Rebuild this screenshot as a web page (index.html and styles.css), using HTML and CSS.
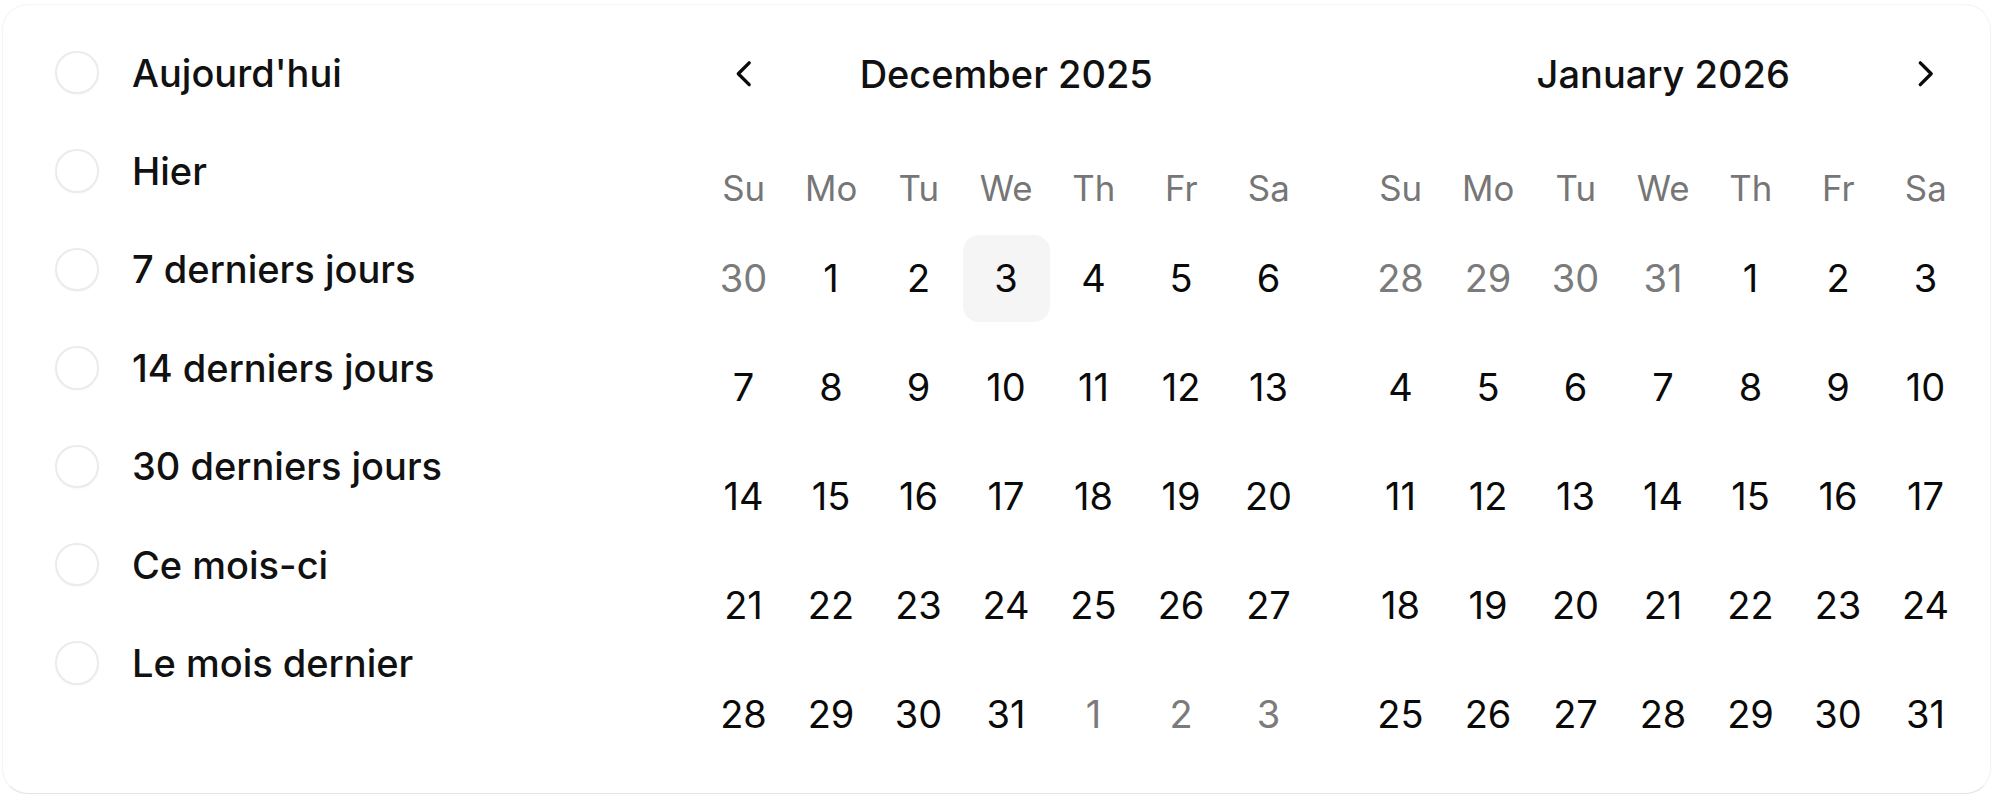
FILE: index.html
```html
<!DOCTYPE html>
<html lang="fr">
<head>
<meta charset="utf-8">
<title>Date range picker</title>
<link rel="stylesheet" href="styles.css">
</head>
<body>
<div class="card">
  <div class="presets">
    <label class="preset"><span class="radio"></span><span class="preset-label">Aujourd'hui</span></label>
    <label class="preset"><span class="radio"></span><span class="preset-label">Hier</span></label>
    <label class="preset"><span class="radio"></span><span class="preset-label">7 derniers jours</span></label>
    <label class="preset"><span class="radio"></span><span class="preset-label">14 derniers jours</span></label>
    <label class="preset"><span class="radio"></span><span class="preset-label">30 derniers jours</span></label>
    <label class="preset"><span class="radio"></span><span class="preset-label">Ce mois-ci</span></label>
    <label class="preset"><span class="radio"></span><span class="preset-label">Le mois dernier</span></label>
  </div>
  <div class="calendar">
    <div class="month">
      <div class="caption">
        <button class="nav nav-prev" aria-label="Previous month">
          <svg viewBox="0 0 24 24" fill="none" stroke="currentColor" stroke-width="1.85" stroke-linecap="round" stroke-linejoin="round"><path d="m15 18-6-6 6-6"/></svg>
        </button>
        <div class="title">December 2025</div>
      </div>
      <div class="weekdays">
        <span>Su</span><span>Mo</span><span>Tu</span><span>We</span><span>Th</span><span>Fr</span><span>Sa</span>
      </div>
      <div class="days">
        <span class="day out">30</span><span class="day">1</span><span class="day">2</span><span class="day today">3</span><span class="day">4</span><span class="day">5</span><span class="day">6</span>
        <span class="day">7</span><span class="day">8</span><span class="day">9</span><span class="day">10</span><span class="day">11</span><span class="day">12</span><span class="day">13</span>
        <span class="day">14</span><span class="day">15</span><span class="day">16</span><span class="day">17</span><span class="day">18</span><span class="day">19</span><span class="day">20</span>
        <span class="day">21</span><span class="day">22</span><span class="day">23</span><span class="day">24</span><span class="day">25</span><span class="day">26</span><span class="day">27</span>
        <span class="day">28</span><span class="day">29</span><span class="day">30</span><span class="day">31</span><span class="day out">1</span><span class="day out">2</span><span class="day out">3</span>
      </div>
    </div>
    <div class="month">
      <div class="caption">
        <div class="title">January 2026</div>
        <button class="nav nav-next" aria-label="Next month">
          <svg viewBox="0 0 24 24" fill="none" stroke="currentColor" stroke-width="1.85" stroke-linecap="round" stroke-linejoin="round"><path d="m9 18 6-6-6-6"/></svg>
        </button>
      </div>
      <div class="weekdays">
        <span>Su</span><span>Mo</span><span>Tu</span><span>We</span><span>Th</span><span>Fr</span><span>Sa</span>
      </div>
      <div class="days">
        <span class="day out">28</span><span class="day out">29</span><span class="day out">30</span><span class="day out">31</span><span class="day">1</span><span class="day">2</span><span class="day">3</span>
        <span class="day">4</span><span class="day">5</span><span class="day">6</span><span class="day">7</span><span class="day">8</span><span class="day">9</span><span class="day">10</span>
        <span class="day">11</span><span class="day">12</span><span class="day">13</span><span class="day">14</span><span class="day">15</span><span class="day">16</span><span class="day">17</span>
        <span class="day">18</span><span class="day">19</span><span class="day">20</span><span class="day">21</span><span class="day">22</span><span class="day">23</span><span class="day">24</span>
        <span class="day">25</span><span class="day">26</span><span class="day">27</span><span class="day">28</span><span class="day">29</span><span class="day">30</span><span class="day">31</span>
      </div>
    </div>
  </div>
</div>
</body>
</html>
```

FILE: styles.css
```css
* { box-sizing: border-box; }

html, body {
  margin: 0;
  padding: 0;
  background: #ffffff;
}

body {
  font-family: Inter, "Noto Sans", sans-serif;
  color: #0a0a0a;
  width: 2000px;
  height: 794px;
  overflow: hidden;
}

.card {
  margin: 4px 0 0 2px;
  width: 1989px;
  height: 790px;
  border: 1px solid #f4f4f4;
  border-bottom-color: #e4e4e4;
  border-radius: 26px;
  box-shadow: 0 1px 2px rgba(0, 0, 0, 0.03);
  display: flex;
  background: #fff;
}

.presets {
  width: 675px;
  flex: none;
  padding: 18.5px 0 0 52px;
  display: flex;
  flex-direction: column;
}

.preset {
  height: 98.4px;
  display: flex;
  align-items: center;
  gap: 33.5px;
}

.radio {
  width: 43.5px;
  height: 43.5px;
  flex: none;
  border-radius: 50%;
  border: 2.7px solid #ebebeb;
  box-shadow: 0 1px 2px rgba(0, 0, 0, 0.03);
}

.preset-label {
  font-size: 38px;
  font-weight: 500;
  line-height: 1;
  color: #111111;
}

.calendar {
  flex: none;
  padding: 25.5px 0 0 22px;
  display: flex;
  gap: 44.5px;
}

.month {
  width: 612.5px;
  display: flex;
  flex-direction: column;
}

.caption {
  height: 87px;
  display: grid;
  grid-template-columns: 87.5px 1fr 87.5px;
  align-items: center;
}

.title {
  grid-column: 2;
  text-align: center;
  font-size: 38px;
  font-weight: 500;
  line-height: 1;
  color: #111111;
}

.nav {
  width: 87px;
  height: 87px;
  padding: 0;
  border: 0;
  background: transparent;
  color: #0a0a0a;
  display: flex;
  align-items: center;
  justify-content: center;
}

.nav-prev { grid-column: 1; grid-row: 1; }
.nav-next { grid-column: 3; grid-row: 1; }

.nav svg {
  width: 43.5px;
  height: 43.5px;
}

.weekdays {
  margin-top: 44.5px;
  height: 52px;
  display: grid;
  grid-template-columns: repeat(7, 87.5px);
  align-items: center;
}

.weekdays span {
  text-align: center;
  font-size: 34.8px;
  line-height: 1;
  color: #767676;
}

.days {
  margin-top: 20.5px;
  display: grid;
  grid-template-columns: repeat(7, 87.5px);
  grid-auto-rows: 87px;
  row-gap: 22px;
}

.day {
  display: flex;
  align-items: center;
  justify-content: center;
  width: 87px;
  height: 87px;
  font-size: 38px;
  line-height: 1;
  color: #0a0a0a;
  border-radius: 16px;
}

.day.out {
  color: #7b7b7b;
}

.day.today {
  background: #f5f5f5;
}
```
